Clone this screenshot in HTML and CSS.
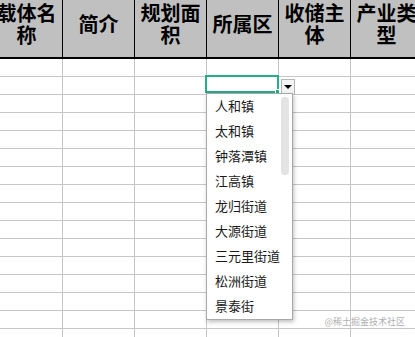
FILE: index.html
```html
<!DOCTYPE html>
<html lang="zh-CN">
<head>
    <meta charset="UTF-8">
    <meta name="viewport" content="width=device-width, initial-scale=1.0">
    <title>表格</title>
    <link rel="stylesheet" href="styles.css">
</head>
<body>

    <div class="wrap">
        <div class="sheet" id="sheet">
            <div class="row head">
                <div class="cell">载体名称</div>
                <div class="cell">简介</div>
                <div class="cell">规划面积</div>
                <div class="cell">所属区</div>
                <div class="cell">收储主体</div>
                <div class="cell">产业类型</div>
            </div>
        </div>

        <!-- 选中的单元格 -->
        <div class="selected"><span class="handle"></span></div>
        <div class="drop-btn"><span class="arrow"></span></div>

        <!-- 下拉列表 -->
        <div class="dropdown">
            <ul class="options" id="options"></ul>
            <div class="track"><div class="thumb"></div></div>
        </div>

        <div class="watermark">@稀土掘金技术社区</div>
    </div>

    <script>
        const sheet = document.getElementById('sheet');
        const options = document.getElementById('options');

        // 空白行
        for (let i = 0; i < 16; i++) {
            const row = document.createElement('div');
            row.className = 'row';
            for (let j = 0; j < 6; j++) {
                const cell = document.createElement('div');
                cell.className = 'cell';
                row.appendChild(cell);
            }
            sheet.appendChild(row);
        }

        const towns = ['人和镇', '太和镇', '钟落潭镇', '江高镇', '龙归街道', '大源街道', '三元里街道', '松洲街道', '景泰街'];
        towns.forEach(function(name) {
            const li = document.createElement('li');
            li.innerText = name;
            options.appendChild(li);
        });
    </script>

</body>
</html>
```

FILE: styles.css
```css
* {
    margin: 0;
    padding: 0;
    box-sizing: border-box;
}
body {
    background: #fff;
    overflow: hidden;
    font-family: "Noto Sans CJK SC", "Noto Sans", sans-serif;
}
.wrap {
    position: relative;
    width: 415px;
    height: 337px;
    overflow: hidden;
}
.sheet {
    margin-left: -9px;
}
.row {
    display: flex;
}
.row .cell {
    width: 72px;
    height: 18px;
    flex-shrink: 0;
    border-right: 1px solid #c6c6c6;
    border-bottom: 1px solid #c6c6c6;
}
.head {
    background: #c0c0c0;
    border-bottom: 2px solid #000;
}
.head .cell {
    height: 57px;
    border-bottom: none;
    border-right: 1px solid #000;
    display: flex;
    align-items: center;
    justify-content: center;
    text-align: center;
    padding: 0 5px 10px;
    font-size: 20px;
    line-height: 22px;
    font-weight: bold;
    color: #000;
}
.selected {
    position: absolute;
    left: 205px;
    top: 75px;
    width: 74px;
    height: 18px;
    border: 2px solid #25ad84;
}
.handle {
    position: absolute;
    right: -3px;
    bottom: -3px;
    width: 5px;
    height: 5px;
    background: #25ad84;
    border: 1px solid #fff;
}
.drop-btn {
    position: absolute;
    left: 281px;
    top: 79px;
    width: 14px;
    height: 15px;
    background: #f4f4f4;
    border: 1px solid #b4b4b4;
    border-bottom: none;
    display: flex;
    align-items: center;
    justify-content: center;
}
.arrow {
    width: 0;
    height: 0;
    border-left: 4px solid transparent;
    border-right: 4px solid transparent;
    border-top: 4px solid #000;
}
.dropdown {
    position: absolute;
    left: 206px;
    top: 93px;
    width: 87px;
    height: 227px;
    background: #fff;
    border: 1px solid #a9a9a9;
    box-shadow: 1px 2px 4px rgba(0, 0, 0, 0.25);
    display: flex;
}
.options {
    list-style: none;
    flex: 1;
    margin-top: -1px;
}
.options li {
    height: 25px;
    line-height: 25px;
    padding-left: 8px;
    font-size: 13px;
    color: #1a1a1a;
    white-space: nowrap;
}
.track {
    width: 11px;
    padding: 3px 3px 0 0;
}
.thumb {
    width: 8px;
    height: 78px;
    background: #e4e4e4;
    border-radius: 4px;
}
.watermark {
    position: absolute;
    right: 10px;
    bottom: 9px;
    font-size: 9px;
    color: #b0b0b0;
    text-shadow: 0 0 1px #fff;
}
```
